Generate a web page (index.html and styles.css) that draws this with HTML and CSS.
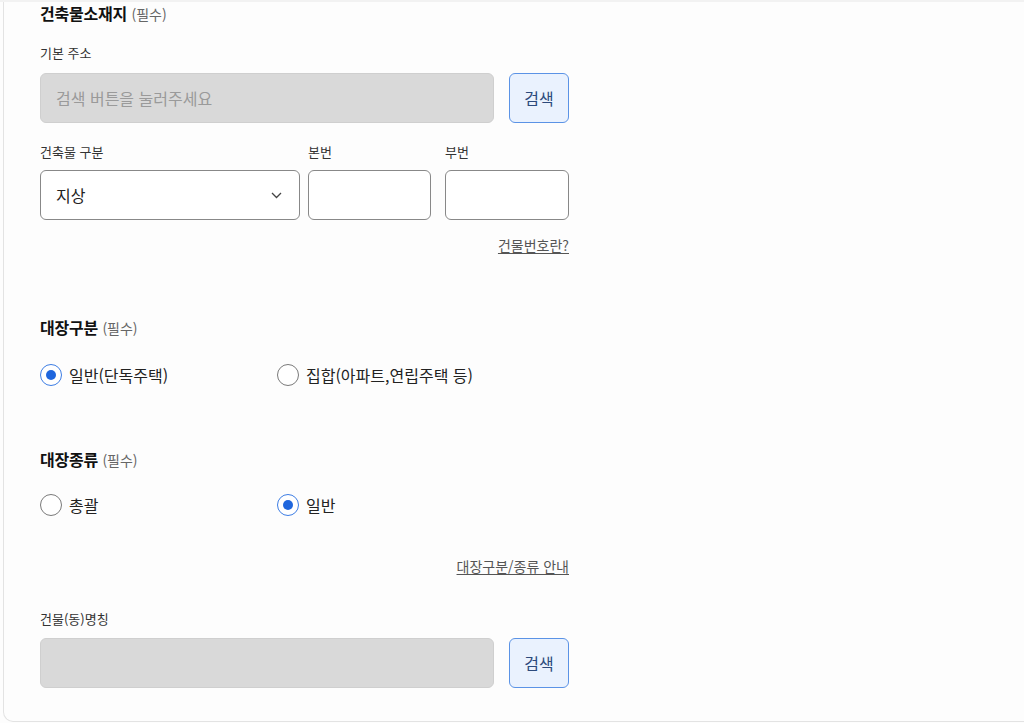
FILE: index.html
```html
<!DOCTYPE html>
<html lang="ko">
<head>
<meta charset="utf-8">
<link rel="stylesheet" href="styles.css">
</head>
<body>
<div class="topline"></div>
<div class="card">
  <div class="section">
    <h2 class="title">건축물소재지 <span class="req">(필수)</span></h2>
    <div class="label first">기본 주소</div>
    <div class="row">
      <div class="input disabled wide"><span class="ph">검색 버튼을 눌러주세요</span></div>
      <button class="btn">검색</button>
    </div>
    <div class="grid3">
      <div class="col col-sel">
        <div class="label">건축물 구분</div>
        <div class="input select"><span class="val">지상</span>
          <svg class="chev" width="11" height="7" viewBox="0 0 11 7"><path d="M1 1l4.5 4.5L10 1" fill="none" stroke="#444" stroke-width="1.3"/></svg>
        </div>
      </div>
      <div class="col col-a">
        <div class="label">본번</div>
        <div class="input"></div>
      </div>
      <div class="col col-b">
        <div class="label">부번</div>
        <div class="input"></div>
      </div>
    </div>
    <div class="linkrow"><a class="link">건물번호란?</a></div>
  </div>

  <div class="section s2">
    <h2 class="title">대장구분 <span class="req">(필수)</span></h2>
    <div class="radios">
      <label class="radio"><span class="dot on"></span>일반(단독주택)</label>
      <label class="radio"><span class="dot"></span>집합(아파트,연립주택 등)</label>
    </div>
  </div>

  <div class="section s3">
    <h2 class="title">대장종류 <span class="req">(필수)</span></h2>
    <div class="radios">
      <label class="radio"><span class="dot"></span>총괄</label>
      <label class="radio"><span class="dot on"></span>일반</label>
    </div>
    <div class="linkrow l2"><a class="link">대장구분/종류 안내</a></div>
  </div>

  <div class="section s4">
    <div class="label">건물(동)명칭</div>
    <div class="row">
      <div class="input disabled wide"></div>
      <button class="btn">검색</button>
    </div>
  </div>
</div>
</body>
</html>
```

FILE: styles.css
```css
* { box-sizing: border-box; }
html, body { margin: 0; padding: 0; background: #fdfdfd; }
body {
  font-family: "Noto Sans CJK KR", "Noto Sans", sans-serif;
  color: #222;
  height: 723px;
  overflow: hidden;
  position: relative;
  font-size: 16px;
  line-height: 22px;
}
.topline {
  position: absolute; left: 0; right: 0; top: 0; height: 2px;
  background: #f2f2f2;
}
.card {
  margin-left: 3px;
  height: 722px;
  border-left: 1px solid #e3e3e3;
  border-bottom: 1px solid #e3e3e3;
  border-bottom-left-radius: 10px;
  background: #fdfdfd;
  padding: 2px 0 0 36px;
}
.section { width: 529px; }
.title {
  margin: 0;
  height: 22px;
  font-size: 16px;
  line-height: 22px;
  font-weight: 700;
  color: #111;
  letter-spacing: -0.2px;
}
.req { font-size: 14px; font-weight: 400; color: #666; letter-spacing: 0; }
.label {
  height: 18px;
  font-size: 13px;
  line-height: 18px;
  color: #333;
  margin-bottom: 9px;
}
.label.first { margin-top: 20px; margin-bottom: 11px; }
.row { display: flex; gap: 15px; }
.input {
  height: 50px;
  border: 1px solid #888;
  border-radius: 6px;
  background: #fff;
  display: flex;
  align-items: center;
  padding: 0 15px;
  font-size: 16px;
}
.input.disabled { background: #d9d9d9; border-color: #cfcfcf; }
.wide { width: 454px; }
.ph { color: #9a9a9a; }
.btn {
  width: 60px; height: 50px;
  border: 1px solid #5b93e6;
  border-radius: 6px;
  background: #eaf2fe;
  color: #2c4a7c;
  font-family: inherit;
  font-size: 16px;
  padding: 0;
}
.grid3 { display: flex; margin-top: 20px; }
.col-sel { width: 260px; margin-right: 8px; }
.col-a { width: 123px; margin-right: 14px; }
.col-b { width: 124px; }
.select { justify-content: space-between; padding-right: 17px; }
.val { color: #222; }
.chev { display: block; }
.linkrow {
  text-align: right;
  margin-top: 16px;
  height: 18px;
  font-size: 14px;
  line-height: 18px;
}
.link {
  color: #555;
  text-decoration: underline;
  text-underline-offset: 2px;
}
.s2 { margin-top: 62px; }
.s3 { margin-top: 61px; }
.s4 { margin-top: 35px; }
.radios {
  display: grid;
  grid-template-columns: 237px auto;
  margin-top: 25px;
  height: 24px;
}
.s3 .radios { margin-top: 23px; }
.radio {
  display: flex; align-items: center; gap: 7px;
  height: 24px;
  font-size: 16px; line-height: 24px; color: #222;
}
.dot {
  width: 22px; height: 22px;
  border: 1.5px solid #7a7a7a;
  border-radius: 50%;
  position: relative;
  flex: none;
  background: #fff;
}
.dot.on { border-color: #3d7de4; }
.dot.on::after {
  content: "";
  position: absolute;
  left: 50%; top: 50%;
  width: 10px; height: 10px;
  margin: -5px 0 0 -5px;
  border-radius: 50%;
  background: #1f66dd;
}
.l2 { margin-top: 40px; }
.s4 .label { margin-bottom: 10px; }
```
